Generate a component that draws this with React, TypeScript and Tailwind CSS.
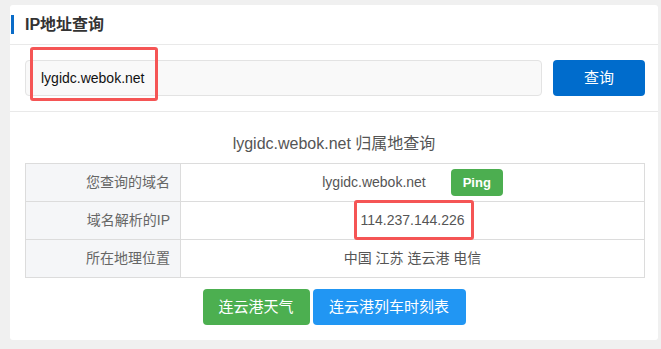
import React from "react";

const rows = [
  { label: "您查询的域名", value: "lygidc.webok.net", ping: true },
  { label: "域名解析的IP", value: "114.237.144.226" },
  { label: "所在地理位置", value: "中国 江苏 连云港 电信" },
];

export default function App() {
  return (
    <div className="w-[661px] h-[349px] bg-[#f0f0f0] pt-[5px] pl-[10px] font-['Liberation_Sans','Noto_Sans_CJK_SC',sans-serif]">
      <div className="relative w-[648px] h-[335px] bg-white rounded-[3px]">
        <div className="flex items-center h-[40px] border-b border-[#e9e9e9]">
          <div className="w-[3px] h-[19px] ml-[1px] bg-[#0a6cc8]" />
          <h2 className="ml-[11px] text-[16px] font-bold text-[#333]">IP地址查询</h2>
        </div>

        <div className="flex items-center gap-[11px] pl-[15px] py-[15px] border-b border-[#e9e9e9]">
          <div className="flex items-center w-[517px] h-[36px] px-[15px] bg-[#f9f9f9] border border-[#e3e3e3] rounded-[4px] text-[14px] text-[#111]">
            lygidc.webok.net
          </div>
          <button className="w-[92px] h-[36px] rounded-[4px] bg-[#006ccc] text-white text-[15px]">查询</button>
        </div>

        <div className="px-[15px] pt-[20px]">
          <h3 className="text-center text-[16px] leading-[24px] text-[#555]">lygidc.webok.net 归属地查询</h3>
          <table className="mt-[7px] w-[620px] border-collapse text-[14px]">
            <tbody>
              {rows.map((r) => (
                <tr key={r.label} className="h-[38px]">
                  <td className="w-[155px] border border-[#dcdcdc] bg-[#f5f6f8] text-right pr-[10px] text-[#666]">{r.label}</td>
                  <td className="border border-[#dcdcdc] text-center text-[#555]">
                    <div className="flex items-center justify-center gap-[25px]">
                      <span>{r.value}</span>
                      {r.ping && (
                        <span className="flex items-center justify-center w-[52px] h-[27px] rounded-[4px] bg-[#4cae50] text-white text-[13px] font-bold">Ping</span>
                      )}
                    </div>
                  </td>
                </tr>
              ))}
            </tbody>
          </table>
          <div className="flex justify-center gap-[3px] mt-[11px]">
            <button className="w-[107px] h-[36px] rounded-[4px] bg-[#4caf50] text-white text-[15px]">连云港天气</button>
            <button className="w-[153px] h-[36px] rounded-[4px] bg-[#2196f3] text-white text-[15px]">连云港列车时刻表</button>
          </div>
        </div>

        <div className="absolute left-[20px] top-[42px] w-[128px] h-[54px] border-[3px] border-[#f55555] rounded-[3px]" />
        <div className="absolute left-[344px] top-[195px] w-[120px] h-[40px] border-[3px] border-[#f55555] rounded-[3px]" />
      </div>
    </div>
  );
}
